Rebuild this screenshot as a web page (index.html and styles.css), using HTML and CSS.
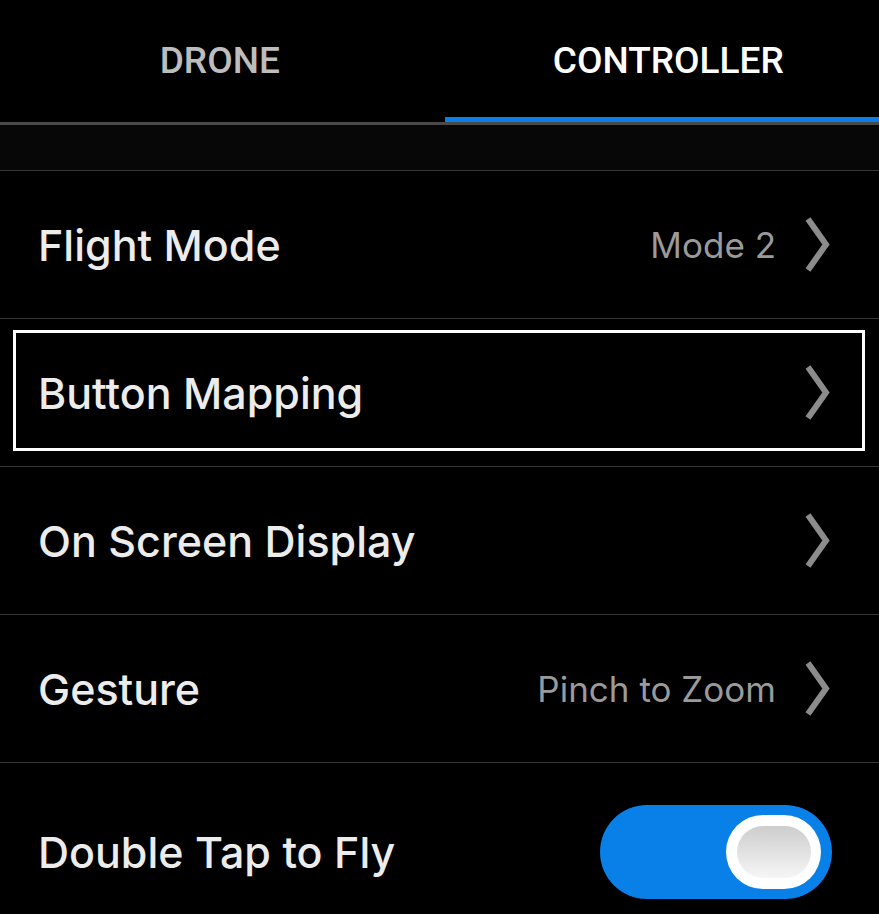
FILE: index.html
```html
<!DOCTYPE html>
<html lang="en">
<head>
<meta charset="utf-8">
<title>Controller Settings</title>
<link rel="stylesheet" href="styles.css">
</head>
<body>
<div class="screen">
  <nav class="tabs">
    <div class="tab">DRONE</div>
    <div class="tab tab-active">CONTROLLER</div>
  </nav>
  <div class="viewport">
    <ul class="list">
      <li class="row row-partial"></li>
      <li class="row">
        <span class="label">Flight Mode</span>
        <span class="value">Mode 2</span>
        <svg class="chev" viewBox="0 0 25 55" width="25" height="55"><polyline points="3,2 21,27.5 3,53" /></svg>
      </li>
      <li class="row row-focus">
        <span class="label">Button Mapping</span>
        <svg class="chev" viewBox="0 0 25 55" width="25" height="55"><polyline points="3,2 21,27.5 3,53" /></svg>
      </li>
      <li class="row">
        <span class="label">On Screen Display</span>
        <svg class="chev" viewBox="0 0 25 55" width="25" height="55"><polyline points="3,2 21,27.5 3,53" /></svg>
      </li>
      <li class="row">
        <span class="label">Gesture</span>
        <span class="value">Pinch to Zoom</span>
        <svg class="chev" viewBox="0 0 25 55" width="25" height="55"><polyline points="3,2 21,27.5 3,53" /></svg>
      </li>
      <li class="row row-toggle">
        <span class="label">Double Tap to Fly</span>
        <span class="toggle"><span class="knob"><span class="knob-inner"></span></span></span>
      </li>
    </ul>
  </div>
</div>
</body>
</html>
```

FILE: styles.css
```css
html, body {
  margin: 0;
  padding: 0;
  background: #000;
}

.screen {
  width: 879px;
  height: 914px;
  overflow: hidden;
  background: #000;
  display: flex;
  flex-direction: column;
}

.tabs {
  display: flex;
  height: 122px;
  border-bottom: 3px solid #4a4a4a;
  flex: none;
}

.tab {
  width: 50%;
  box-sizing: border-box;
  display: flex;
  align-items: center;
  justify-content: center;
  padding-bottom: 2px;
  font-family: Roboto, "Liberation Sans", sans-serif;
  font-weight: 500;
  font-size: 37px;
  color: #bdbdbd;
  position: relative;
}

.tab-active {
  color: #fff;
  padding-left: 18px;
}

.tab-active::after {
  content: "";
  position: absolute;
  left: 5px;
  right: 0;
  bottom: 0;
  height: 5px;
  background: #0b7fe6;
}

.viewport {
  flex: 1;
  overflow: hidden;
}

.list {
  list-style: none;
  margin: -102px 0 0;
  padding: 0;
}

.row {
  height: 147px;
  border-bottom: 1px solid #373737;
  display: flex;
  align-items: center;
  padding: 0 49px 0 38px;
  position: relative;
  font-family: Inter, "Open Sans", sans-serif;
}

.row-partial {
  background: #070707;
}

.label {
  flex: 1;
  font-size: 43px;
  font-weight: 500;
  color: #ececec;
}

.value {
  font-size: 35px;
  font-weight: 400;
  color: #9a9a9a;
  margin-right: 29px;
}

.chev {
  display: block;
  flex: none;
}

.chev polyline {
  fill: none;
  stroke: #8c8c8c;
  stroke-width: 6;
}

.row-focus::after {
  content: "";
  position: absolute;
  left: 13px;
  right: 14px;
  top: 11px;
  bottom: 15px;
  border: 3px solid #fff;
}

.row-toggle {
  height: 178px;
  padding-right: 47px;
  border-bottom: none;
}

.toggle {
  width: 232px;
  height: 94px;
  border-radius: 47px;
  background: #0880e8;
  display: flex;
  align-items: center;
  justify-content: flex-end;
  padding-right: 11px;
  box-sizing: border-box;
  flex: none;
}

.knob {
  width: 95px;
  height: 74px;
  border-radius: 37px;
  background: #fff;
  display: flex;
  align-items: center;
  justify-content: center;
}

.knob-inner {
  width: 74px;
  height: 52px;
  border-radius: 26px;
  background: linear-gradient(#cdcdcd, #f6f6f6);
}
```
